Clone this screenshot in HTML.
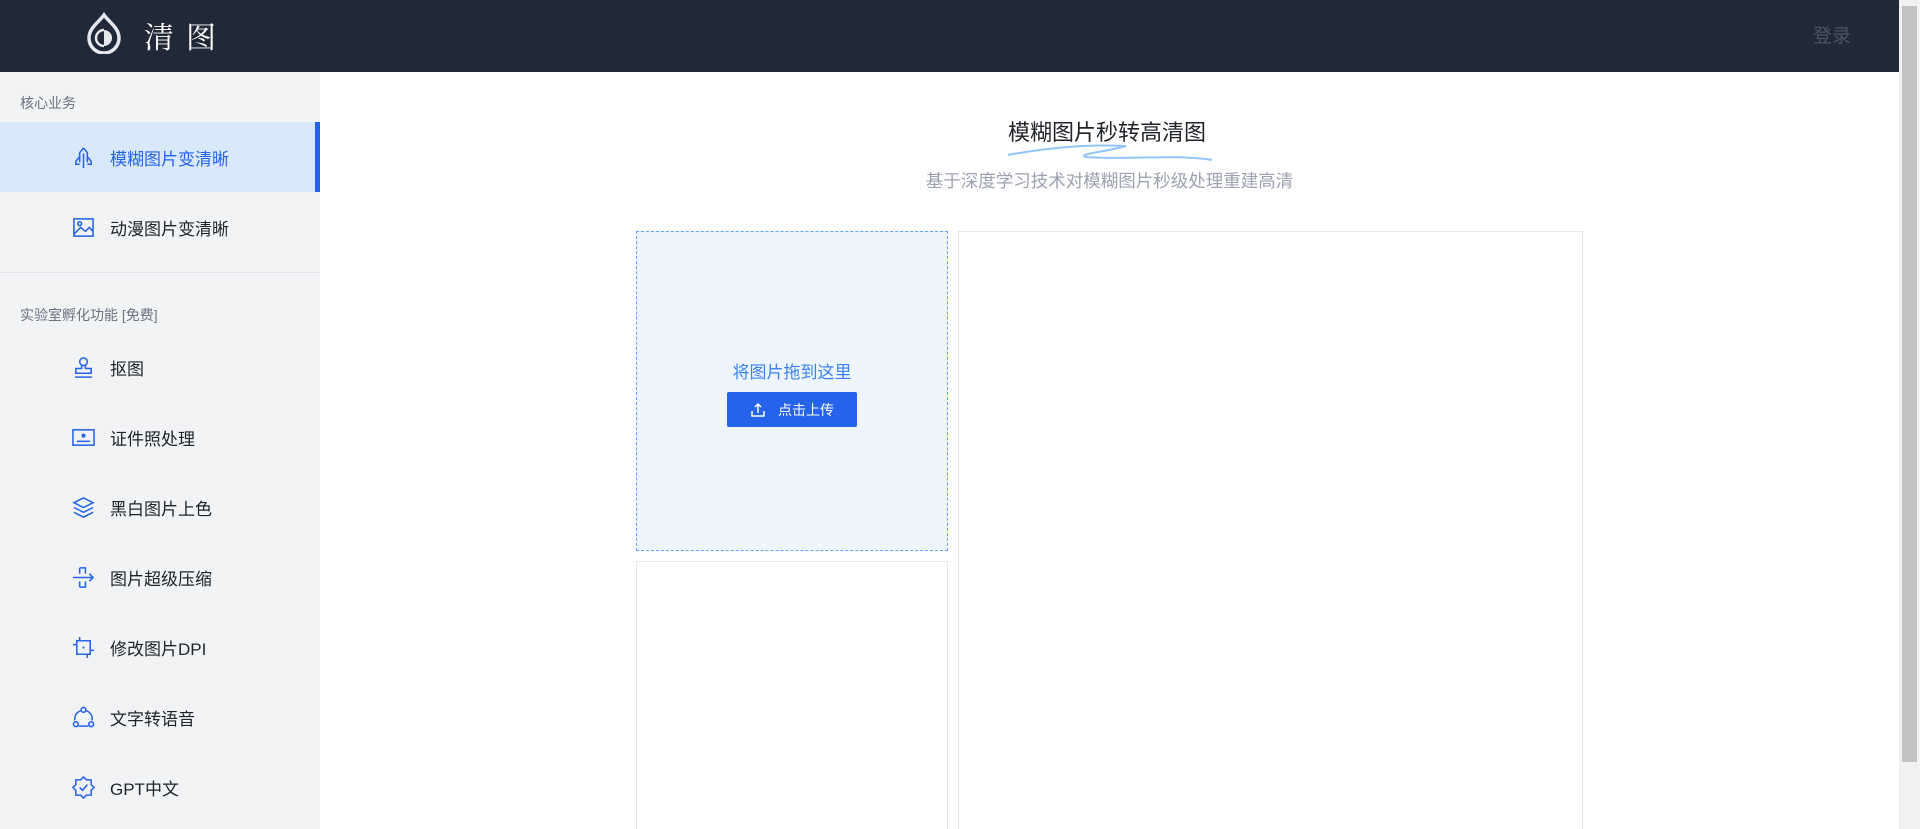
<!DOCTYPE html>
<html style="width:1920px;height:829px;overflow:hidden"><head><meta charset="utf-8"><style>
*{margin:0;padding:0;box-sizing:border-box}
body{width:1920px;height:829px;overflow:hidden;background:#fff;font-family:"Liberation Sans","Noto Sans CJK SC",sans-serif;position:relative}
.hdr{position:absolute;left:0;top:0;width:1899px;height:72px;background:#1f2937}
.logo{position:absolute;left:85px;top:12px}
.brand{position:absolute;left:144px;top:13px;color:#fff;font-size:30px;letter-spacing:12px;font-family:"Noto Serif CJK SC",serif}
.login{position:absolute;left:1813px;top:21px;color:#4b5563;font-size:19px}
.side{position:absolute;left:0;top:72px;width:320px;height:757px;background:#f2f3f5}
.lab{position:absolute;left:20px;font-size:14px;color:#6b7280}
.it{position:absolute;left:0;width:320px;height:70px;display:flex;align-items:center;padding-left:72px;font-size:17px;color:#1f2328}
.it svg{width:23px;height:23px;margin-right:15px;flex:none}
.act{background:#d9e8fb;color:#2563eb}
.act:after{content:"";position:absolute;right:0;top:0;width:5px;height:70px;background:#2563eb}
.div{position:absolute;left:0;top:200px;width:320px;height:1px;background:#e1e3e6}
.sb{position:absolute;left:1899px;top:0;width:21px;height:829px;background:#f1f1f1}
.sb i{position:absolute;left:3px;top:6px;width:15px;height:756px;background:#c1c1c1}
.title{position:absolute;left:1008px;top:115px;font-size:22px;color:#1f2328}
.sub{position:absolute;left:0;width:2219px;text-align:center;top:168px;font-size:17.5px;color:#9ca3af}
.up{position:absolute;left:636px;top:231px;width:312px;height:320px;background:#eef5fd;border:1px dashed #60a5fa}
.up .t{position:absolute;top:126px;width:100%;text-align:center;color:#3b82f6;font-size:17px}
.btn{position:absolute;left:90px;top:160px;width:130px;height:35px;background:#2563eb;border-radius:2px;color:#fff;font-size:14px;display:flex;align-items:center;justify-content:center}
.box{position:absolute;border:1px solid #e5e7eb;border-bottom:none;background:#fff}
</style></head><body>
<div class="hdr">
<svg class="logo" width="38" height="42" viewBox="0 0 38 42"><path d="M19 3 C14 10 4 16 4 26 A15 15 0 0 0 34 26 C34 16 24 10 19 3Z" fill="none" stroke="#e5e7eb" stroke-width="3.5"/><path d="M19 18 A8 8 0 0 1 19 34Z" fill="#e5e7eb"/><path d="M19 18 A8 8 0 0 0 19 34" fill="none" stroke="#e5e7eb" stroke-width="2.5"/></svg>
<div class="brand">清图</div>
<div class="login">登录</div>
</div>
<div class="side">
<div class="lab" style="top:21px">核心业务</div>
<div class="it act" style="top:50px"><svg viewBox="0 0 24 24" fill="none" stroke="#2563eb" stroke-width="1.6"><path d="M12 2 L8 7 V17 M12 2 L16 7 V17 M12 8 V23 M8 11 L4 16 V19 H8 M16 11 L20 16 V19 H16"/></svg>模糊图片变清晰</div>
<div class="it" style="top:120px"><svg viewBox="0 0 24 24" fill="none" stroke="#2563eb" stroke-width="1.6"><rect x="2" y="3" width="20" height="18"/><circle cx="8" cy="8" r="2"/><path d="M2 19 L9 12 L14 16 L18 12 L22 16"/></svg>动漫图片变清晰</div>
<div class="div"></div>
<div class="lab" style="top:233px">实验室孵化功能 [免费]</div>
<div class="it" style="top:260px"><svg viewBox="0 0 24 24" fill="none" stroke="#2563eb" stroke-width="1.6"><circle cx="12" cy="6" r="4"/><path d="M10 10 V13 H4 V18 H20 V13 H14 V10 M3 22 H21"/></svg>抠图</div>
<div class="it" style="top:330px"><svg viewBox="0 0 24 24" fill="none" stroke="#2563eb" stroke-width="1.6"><rect x="1" y="4" width="22" height="16"/><path d="M5 16 H19"/><circle cx="12" cy="10" r="1.3" fill="#2563eb"/></svg>证件照处理</div>
<div class="it" style="top:400px"><svg viewBox="0 0 24 24" fill="none" stroke="#2563eb" stroke-width="1.6"><path d="M12 2 L22 7 L12 12 L2 7Z M2 12 L12 17 L22 12 M2 17 L12 22 L22 17"/></svg>黑白图片上色</div>
<div class="it" style="top:470px"><svg viewBox="0 0 24 24" fill="none" stroke="#2563eb" stroke-width="1.6"><path d="M8 2 H14 V8 M8 22 H14 V16 M1 12 H22 M18 8 L22 12 L18 16 M8 2 V8 M8 16 V22"/></svg>图片超级压缩</div>
<div class="it" style="top:540px"><svg viewBox="0 0 24 24" fill="none" stroke="#2563eb" stroke-width="1.6"><path d="M5 5 H19 V19 H5Z M8 1 V5 M16 19 V23 M1 9 H5 M19 15 H23 M11 12 H13 M12 11 V13"/></svg>修改图片DPI</div>
<div class="it" style="top:610px"><svg viewBox="0 0 24 24" fill="none" stroke="#2563eb" stroke-width="1.6"><circle cx="12" cy="4" r="2.5"/><circle cx="4" cy="19" r="2.5"/><circle cx="20" cy="19" r="2.5"/><path d="M9 5 A9 9 0 0 0 3 15 M15 5 A9 9 0 0 1 21 15 M7 21 H17"/></svg>文字转语音</div>
<div class="it" style="top:680px"><svg viewBox="0 0 24 24" fill="none" stroke="#2563eb" stroke-width="1.6"><path d="M12 1 L15 4 H20 V9 L23 12 L20 15 V20 H15 L12 23 L9 20 H4 V15 L1 12 L4 9 V4 H9Z M8 12 L11 15 L16 9"/></svg>GPT中文</div>
</div>
<div class="title">模糊图片秒转高清图</div>
<svg style="position:absolute;left:1006px;top:140px" width="210" height="22"><path d="M2 15 C40 8 80 4 120 6 C100 12 70 14 80 17 C120 20 170 14 206 20" fill="none" stroke="#93c5fd" stroke-width="2"/></svg>
<div class="sub">基于深度学习技术对模糊图片秒级处理重建高清</div>
<div class="up"><div class="t">将图片拖到这里</div><div class="btn"><svg width="16" height="16" viewBox="0 0 16 16" fill="none" stroke="#fff" stroke-width="1.5" style="margin-right:12px"><path d="M8 11 V2 M5 5 L8 2 L11 5 M2 9 V14 H14 V9"/></svg>点击上传</div></div>
<div class="box" style="left:958px;top:231px;width:625px;height:598px"></div>
<div class="box" style="left:636px;top:561px;width:312px;height:268px"></div>
<div class="sb"><i></i></div>
</body></html>
